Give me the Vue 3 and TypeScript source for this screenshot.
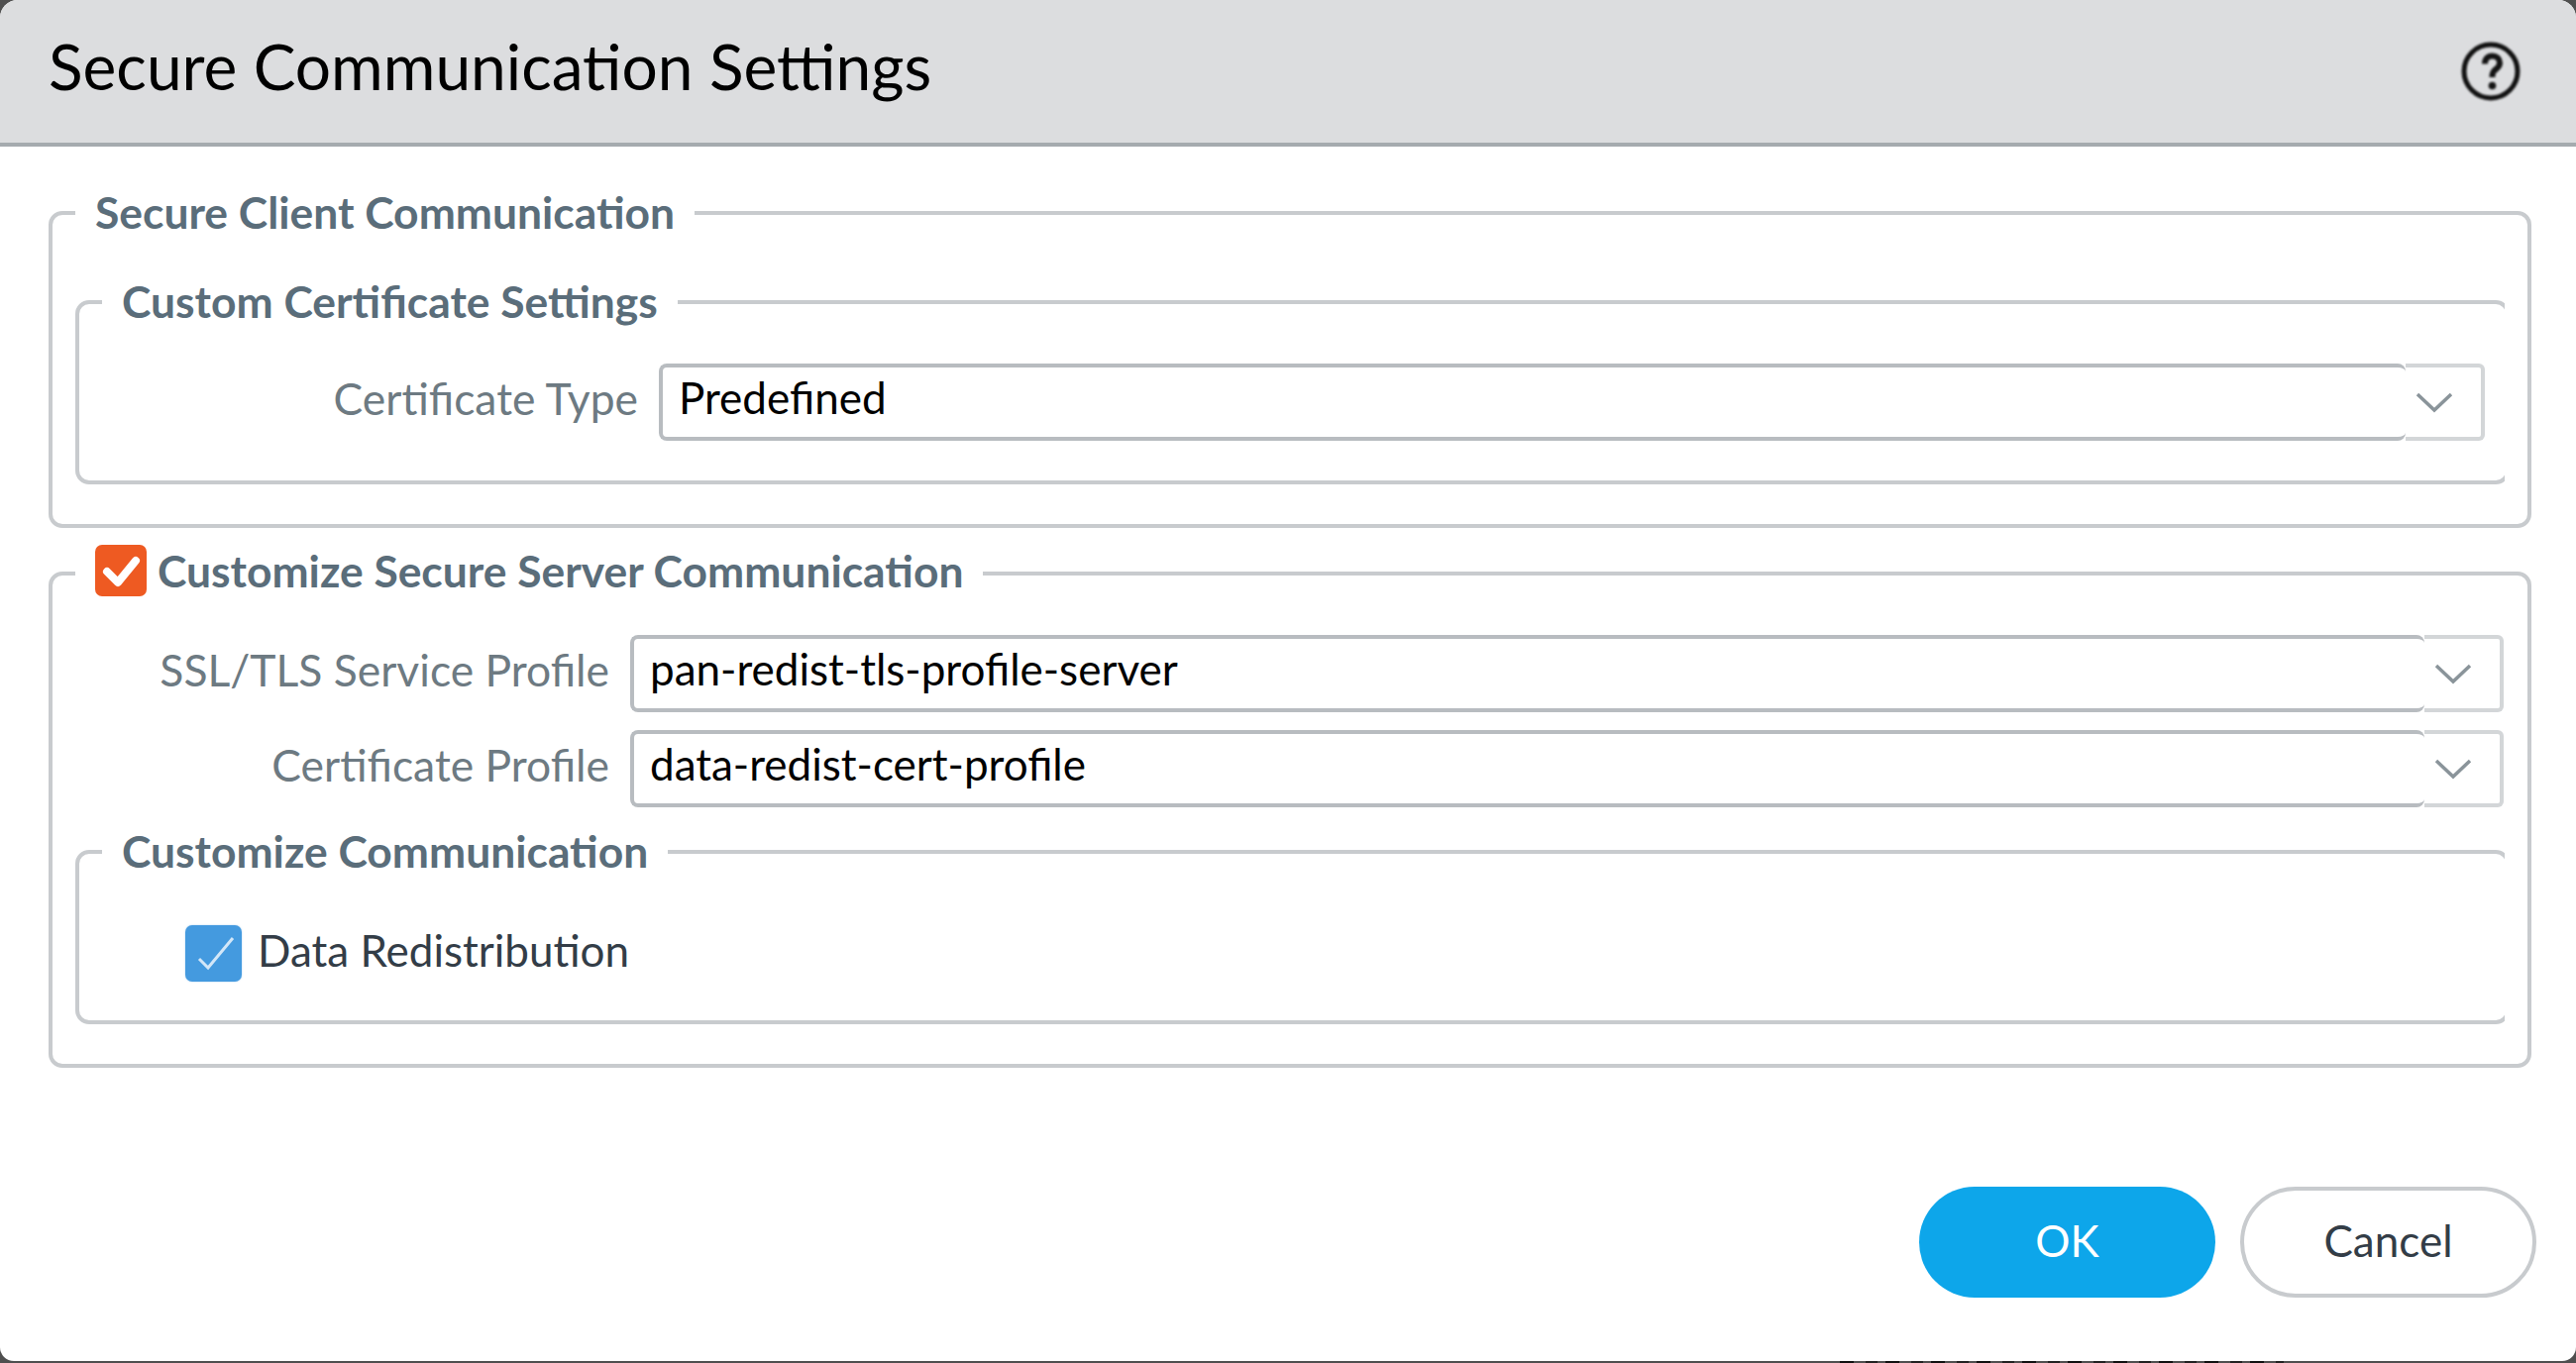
<script setup lang="ts">
interface SelectRow { label: string; value: string }
const rows: SelectRow[] = [
  { label: 'SSL/TLS Service Profile', value: 'pan-redist-tls-profile-server' },
  { label: 'Certificate Profile', value: 'data-redist-cert-profile' },
]
</script>

<template>
  <div class="page">
    <div class="dialog">
      <header class="head">
        <h1 class="title">Secure Communication Settings</h1>
        <svg class="help" viewBox="0 0 60 60" width="60" height="60">
          <circle cx="30" cy="30" r="27" fill="none" stroke="#111" stroke-width="5" />
          <path d="M24 22.500c0-5 3-8 7.500-8s7.500 3 7.500 7c0 3.500-2 5-4 6.500-2.300 1.700-3.500 3-3.500 8" fill="none" stroke="#141414" stroke-width="6" />
          <circle cx="31.500" cy="44.500" r="3.800" fill="#141414" />
        </svg>
      </header>

      <main class="body">
        <fieldset class="group outer first">
          <legend class="legend"><span>Secure Client Communication</span></legend>
          <div class="clip">
            <fieldset class="group inner cert">
              <legend class="legend"><span>Custom Certificate Settings</span></legend>
              <div class="row type-row">
                <label class="label">Certificate Type</label>
                <div class="combo">
                  <div class="input">Predefined</div>
                  <div class="caret">
                    <svg viewBox="0 0 38 22" width="38" height="22"><path d="M2 3l17 16L36 3" fill="none" stroke="#8a949a" stroke-width="3.500" /></svg>
                  </div>
                </div>
              </div>
            </fieldset>
          </div>
        </fieldset>

        <fieldset class="group outer second">
          <legend class="legend check-legend">
            <span class="orange-box">
              <svg viewBox="0 0 52 52" width="52" height="52"><path d="M12 27l11 11L41 16" fill="none" stroke="#fff" stroke-width="8" stroke-linejoin="round" stroke-linecap="round" /></svg>
            </span>
            <span>Customize Secure Server Communication</span>
          </legend>
          <div class="rows">
            <div v-for="row in rows" :key="row.label" class="row">
              <label class="label">{{ row.label }}</label>
              <div class="combo">
                <div class="input">{{ row.value }}</div>
                <div class="caret">
                  <svg viewBox="0 0 38 22" width="38" height="22"><path d="M2 3l17 16L36 3" fill="none" stroke="#8a949a" stroke-width="3.500" /></svg>
                </div>
              </div>
            </div>
          </div>
          <div class="clip">
            <fieldset class="group inner comm">
              <legend class="legend"><span>Customize Communication</span></legend>
              <div class="check-row">
                <span class="blue-box">
                  <svg viewBox="0 0 57 57" width="57" height="57"><path d="M14 34l9 9L48 13" fill="none" stroke="#d3e7f8" stroke-width="3" /></svg>
                </span>
                <span class="check-text">Data Redistribution</span>
              </div>
            </fieldset>
          </div>
        </fieldset>

        <div class="actions">
          <button class="btn ok" type="button">OK</button>
          <button class="btn cancel" type="button">Cancel</button>
        </div>
      </main>
    </div>
    <div class="under"></div>
  </div>
</template>

<style>
html, body { margin: 0; padding: 0; background: #4f4f4f; }
</style>

<style scoped>
.page {
  width: 2600px;
  height: 1376px;
  overflow: hidden;
  background: #4f4f4f;
  font-family: Lato, "Open Sans", sans-serif;
}
.dialog {
  width: 2600px;
  height: 1374px;
  background: #fff;
  border-radius: 18px 18px 14px 14px;
  overflow: hidden;
  display: flex;
  flex-direction: column;
}
.under {
  height: 2px;
  width: 448px;
  margin-left: 1857px;
  background: repeating-linear-gradient(90deg, #111 0 14px, #4f4f4f 14px 26px, #222 26px 38px, #4f4f4f 38px 46px);
}
.head {
  height: 144px;
  flex: none;
  background: #dcdddf;
  border-bottom: 4px solid #a5abaf;
  display: flex;
  align-items: center;
  justify-content: space-between;
  padding: 0 56px 0 49px;
}
.title {
  margin: 0 0 12px;
  font-size: 64px;
  font-weight: 400;
  color: #000;
}
.help {
  filter: blur(0.8px);
}
.body {
  flex: 1;
  padding: 0 45px 0 49px;
  display: flex;
  flex-direction: column;
}
.group {
  margin: 0;
  min-width: 0;
  border: 4px solid #c8cbce;
  border-radius: 14px;
}
.outer {
  padding: 0 23px;
}
.first {
  margin-top: 42px;
  height: 343px;
  box-sizing: border-box;
}
.second {
  margin-top: 17px;
  height: 528px;
  box-sizing: border-box;
}
.legend {
  padding: 0 20px 3px;
  margin-left: 0;
  font-size: 44.400px;
  line-height: 47px;
  font-weight: 700;
  color: #5a6d7a;
}
.check-legend {
  display: flex;
  align-items: flex-start;
  gap: 11px;
  line-height: 52px;
  padding-bottom: 6px;
}
.orange-box {
  width: 52px;
  height: 52px;
  border-radius: 7px;
  background: #ee5a22;
  display: block;
}
.clip {
  overflow: hidden;
}
.inner {
  margin-right: -5px;
  padding: 0 21px 0 0;
}
.inner .legend {
  margin-left: 23px;
}
.cert {
  margin-top: 40px;
  height: 209px;
  box-sizing: border-box;
}
.comm {
  margin-top: 20px;
  height: 199px;
  box-sizing: border-box;
}
.row {
  display: flex;
  align-items: center;
  justify-content: flex-end;
  height: 78px;
  gap: 21px;
}
.type-row {
  margin-top: 37px;
}
.rows {
  display: flex;
  flex-direction: column;
  gap: 18px;
  margin-top: 33px;
  margin-right: 1px;
}
.label {
  font-size: 44.400px;
  color: #6d7a82;
  padding-bottom: 9px;
}
.combo {
  display: flex;
  height: 78px;
}
.type-row .combo .input { width: 1763px; }
.rows .combo .input { width: 1811px; }
.input {
  box-sizing: border-box;
  height: 78px;
  border: 4px solid #b8bcc0;
  border-right: 0;
  border-radius: 8px;
  padding-left: 16px;
  font-size: 44px;
  line-height: 61px;
  color: #000;
}
.caret {
  box-sizing: border-box;
  width: 80px;
  height: 78px;
  border: 4px solid #d3d6d8;
  border-left: 0;
  border-radius: 0 6px 6px 0;
  display: flex;
  align-items: center;
  justify-content: center;
  padding-right: 18px;
}
.caret svg {
  filter: blur(0.7px);
}
.check-row {
  display: flex;
  align-items: center;
  gap: 16px;
  padding-left: 107px;
  margin-top: 48px;
}
.blue-box {
  width: 57px;
  height: 57px;
  border-radius: 7px;
  background: #449adf;
  box-shadow: 0 0 2px #a7cff0;
  display: block;
}
.blue-box svg {
  filter: blur(0.5px);
}
.check-text {
  font-size: 44px;
  color: #333d47;
  padding-bottom: 6px;
}
.actions {
  display: flex;
  justify-content: flex-end;
  gap: 25px;
  margin-top: 120px;
  margin-right: -5px;
}
.btn {
  box-sizing: border-box;
  width: 299px;
  height: 112px;
  border-radius: 56px;
  font-family: inherit;
  font-size: 44px;
  padding: 0 0 5px;
}
.ok {
  border: 0;
  background: #0da6ea;
  color: #fff;
}
.cancel {
  border: 4px solid #c8cbce;
  background: #fff;
  color: #333d47;
}
svg { display: block; }
</style>
